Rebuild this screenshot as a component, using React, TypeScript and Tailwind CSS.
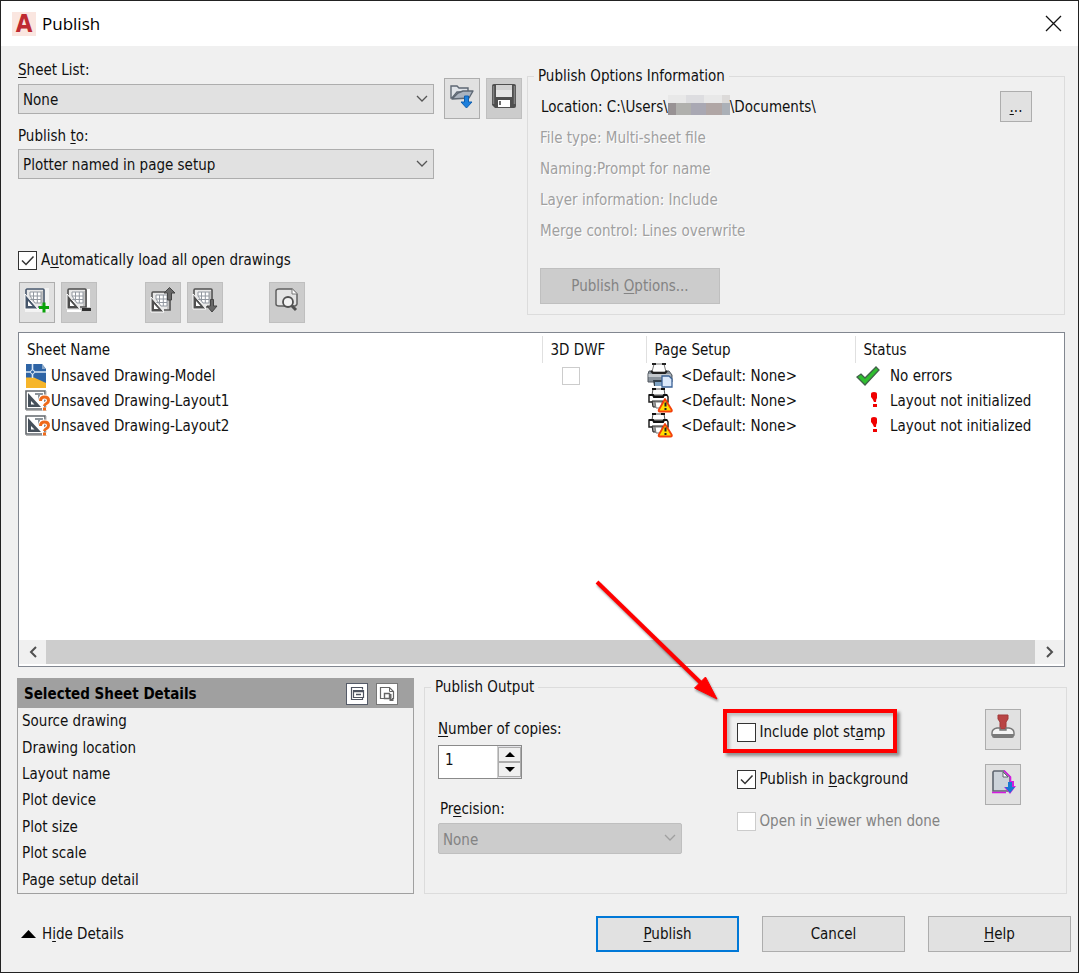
import React from "react";
import { clsx } from "clsx";

type Status = "ok" | "error";

type Sheet = {
  name: string;
  kind: "model" | "layout";
  pageSetup: string;
  status: Status;
  message: string;
};

const sheets: Sheet[] = [
  { name: "Unsaved Drawing-Model", kind: "model", pageSetup: "<Default: None>", status: "ok", message: "No errors" },
  { name: "Unsaved Drawing-Layout1", kind: "layout", pageSetup: "<Default: None>", status: "error", message: "Layout not initialized" },
  { name: "Unsaved Drawing-Layout2", kind: "layout", pageSetup: "<Default: None>", status: "error", message: "Layout not initialized" },
];

const details = [
  "Source drawing",
  "Drawing location",
  "Layout name",
  "Plot device",
  "Plot size",
  "Plot scale",
  "Page setup detail",
];

const options = [
  "File type: Multi-sheet file",
  "Naming:Prompt for name",
  "Layer information: Include",
  "Merge control: Lines overwrite",
];

// Underlined keyboard mnemonic
const Key = ({ children }: { children: React.ReactNode }) => (
  <span className="underline decoration-1 underline-offset-2">{children}</span>
);

/* ---------- icons ---------- */

const OpenListIcon = () => (
  <svg width="26" height="26" viewBox="0 0 26 26">
    <path d="M2 3h6l2 2h9v4H8L3 15H2z" fill="#dfe3e8" stroke="#5d6773" strokeWidth="1.4" />
    <path d="M3 16l6-6 5-2h10l-4 7z" fill="#aab3bf" stroke="#5d6773" strokeWidth="1.4" strokeLinejoin="round" />
    <path d="M15.500 13h4v6h3.500l-5.500 6-5.500-6h3.500z" fill="#1c7fdc" stroke="#0f5fb0" />
  </svg>
);

const SaveIcon = () => (
  <svg width="26" height="26" viewBox="0 0 26 26">
    <path d="M3 1h20q2 0 2 2v20q0 2-2 2H4l-3-3V3q0-2 2-2z" fill="#4f4f4f" />
    <path d="M2.500 3v18M23.500 3v18" stroke="#828282" strokeWidth="1.500" />
    <path d="M5 2h16v12H5z" fill="#e6e6e6" />
    <path d="M5 2h16v5H5z" fill="#d2d2d2" />
    <path d="M7 17h12v7H7z" fill="#fff" />
    <path d="M8 18h2v4H8z" fill="#6b6b6b" />
  </svg>
);

const GridSheet = ({ tone }: { tone: string }) => (
  <>
    <path d="M1 2h19v19H1z" fill="#e9e9e9" />
    <path d="M2 9V3q0-1 1-1h16q1 0 1 1v17H14" fill="none" stroke={tone} strokeWidth="1.600" />
    <path d="M18 4v15" stroke="#9a9a9a" />
    <path d="M6 5h11v11H11L6 9zM6 9h11M6 12.500h11M9.500 5v9M13.300 5v11" fill="#fff" stroke="#9298a0" />
    <path d="M1 7v15h13z" fill={tone} stroke="#fff" />
    <path d="M4 14v5h4.500z" fill="#fff" />
  </>
);

const AddSheetIcon = () => (
  <svg width="26" height="26" viewBox="0 0 26 26">
    <path d="M1 1h24v24H1z" fill="#f3f3f3" />
    <GridSheet tone="#46566b" />
    <path d="M15 20.500h10M20 15.500v10" stroke="#0aa20a" strokeWidth="3" />
  </svg>
);

const RemoveSheetIcon = () => (
  <svg width="26" height="26" viewBox="0 0 26 26">
    <path d="M21 2h3v18h-3z" fill="#fff" />
    <GridSheet tone="#4c4c4c" />
    <path d="M1 23h14v2H1z" fill="#fff" />
    <path d="M16 21h9v3h-9z" fill="#303030" />
  </svg>
);

const MoveUpIcon = () => (
  <svg width="26" height="26" viewBox="0 0 26 26">
    <g transform="translate(0 3)">
      <GridSheet tone="#505050" />
    </g>
    <path d="M14 0h12v13H17V4h-3z" fill="#cccccc" />
    <path d="M17.500 13V6H14l5.500-5.500L25 6h-3.500v7z" fill="#686868" stroke="#444" />
  </svg>
);

const MoveDownIcon = () => (
  <svg width="26" height="26" viewBox="0 0 26 26">
    <GridSheet tone="#505050" />
    <path d="M18.500 12.500h3V19H25l-5 6-5-6h3.500z" fill="#686868" stroke="#444" />
  </svg>
);

const PreviewIcon = () => (
  <svg width="26" height="26" viewBox="0 0 26 26">
    <path d="M5 2h13l5 5v10q0 1-2 2H5q-3 0-3-2V4q0-2 3-2z" fill="#e4e4e4" stroke="#606060" strokeWidth="1.500" />
    <path d="M18 2v5h5" fill="#fff" stroke="#777" />
    <circle cx="14" cy="15" r="5" fill="#f2f2f2" stroke="#505050" strokeWidth="1.800" />
    <path d="M18 19l4 4" stroke="#505050" strokeWidth="3" />
  </svg>
);

const ModelIcon = () => (
  <svg width="22" height="24" viewBox="0 0 22 24">
    <path d="M1 0h16l4 5v19H1z" fill="#2e64a5" />
    <path d="M1 13.500h8L21 19v5H1z" fill="#f6b52a" />
    <path d="M7.500 0v14M1 8h20" stroke="#dbe8f5" strokeWidth="1.600" />
    <circle cx="7.500" cy="8" r="2" fill="#2e64a5" stroke="#dbe8f5" />
    <path d="M17 0v5h4z" fill="#8aa8c8" />
  </svg>
);

const LayoutIcon = () => (
  <svg width="26" height="22" viewBox="0 0 26 22">
    <path d="M1 1h19v18H1z" fill="#fff" stroke="#63686d" strokeWidth="1.600" />
    <path d="M1 20.500h21M21 1v19" stroke="#b5b5b5" />
    <path d="M3 3v14h13z" fill="#46505a" />
    <path d="M6 11v3.500h3.500z" fill="#fff" />
    <path d="M10 4h8M14 4v6" stroke="#8d949a" strokeWidth="2" />
    <path d="M15.500 11q0-4 4-4t4 3.500q0 2-2 3t-2 2.500M19.500 17.500v3" fill="none" stroke="#fff" strokeWidth="5" />
    <path d="M15.500 11q0-4 4-4t4 3.500q0 2-2 3t-2 2.500M19.500 17.500v3" fill="none" stroke="#ee6a1a" strokeWidth="3" />
  </svg>
);

const PrinterIcon = ({ warning }: { warning: boolean }) => (
  <svg width="26" height="26" viewBox="0 1 26 26">
    {warning ? (
      <>
        <path d="M2 8h18l1 2v5H2z" fill="#fff" stroke="#222" strokeWidth="1.500" />
        <path d="M5 8l1-6h11l1 6z" fill="#fff" stroke="#555" />
        <path d="M5 2h4M14 2h4M2 8h4l1 2h9l1-2h3" fill="none" stroke="#111" strokeWidth="2" />
        <path d="M5 14h11v6H6z" fill="#999" stroke="#222" />
        <path d="M8 15h7v6H9z" fill="#fff" stroke="#777" />
        <path d="M18 12l6.500 10.500q1 2-1 2H13q-2 0-1-2z" fill="#ffdf00" stroke="#f3400c" strokeWidth="1.800" strokeLinejoin="round" />
        <path d="M18.500 15.500v4M18.500 21v2" stroke="#222" strokeWidth="2" />
      </>
    ) : (
      <>
        <path d="M2 9h20l3 4v7H1v-8z" fill="#89929b" stroke="#50575e" />
        <path d="M1.500 12h22v3h-22z" fill="#c3c8cd" />
        <path d="M5 10l2-8h10l2 8z" fill="#fff" stroke="#777" />
        <path d="M5 2h4M15 2h4M4 9l2 2h12l2-2" fill="none" stroke="#222" strokeWidth="2" />
        <path d="M6 18h12v6H7z" fill="#33404b" />
        <path d="M8 20h8v4H8z" fill="#7fa3c4" />
        <path d="M15 14h7l3 3v8H15z" fill="#dbe9fb" stroke="#3c6397" strokeWidth="1.300" />
      </>
    )}
  </svg>
);

const StatusIcon = ({ status }: { status: Status }) =>
  status === "ok" ? (
    <svg width="24" height="20" viewBox="0 0 24 20">
      <path d="M1 11l4-3 4 4L20 1l3 3L9 19z" fill="#2fbf2f" stroke="#41614a" strokeWidth="1.300" />
    </svg>
  ) : (
    <svg className="ml-3" width="12" height="18" viewBox="0 1 12 18">
      <path d="M3 3q0-2 3-2t3 2v4q-1 1-1 4H6Q5 8 3 6z" fill="#f00000" />
      <path d="M5 13h4v3H5z" fill="#f00000" />
    </svg>
  );

const StampIcon = () => (
  <svg width="26" height="26" viewBox="0 0 26 26">
    <path d="M8 1h10v4l-2 3v7h-6V8L8 5z" fill="#b94444" stroke="#a23838" />
    <path d="M7 14h3v2h6v-2h3q5 1 5 5v2H2v-2q0-4 5-5z" fill="#f4f4f4" stroke="#777" strokeWidth="1.400" />
    <path d="M2 20h22v2q0 2-2 2H4q-2 0-2-2z" fill="#7b7b7b" />
  </svg>
);

const PublishPageIcon = () => (
  <svg width="26" height="26" viewBox="0 0 26 26">
    <path d="M4 2h10l6 6v14H3V3z" fill="#ccd3da" stroke="#5e6670" strokeWidth="1.600" />
    <path d="M14 1.500l6.500 6.500v5M2 23.500h14" fill="none" stroke="#d41be0" strokeWidth="1.600" />
    <path d="M13 3v5h5z" fill="#fff" stroke="#5e6670" />
    <path d="M20 12h4v5h2l-6 8-6-7h4z" fill="#d41be0" />
    <path d="M18 13h4v5h3l-5 6-5-6h3z" fill="#1878d2" />
  </svg>
);

const DetailListIcon = () => (
  <svg width="18" height="18" viewBox="0 0 18 18" fill="none" stroke="#4d5360">
    <path d="M14.500 4.500v-2h-11v12h11v-2" strokeWidth="1.200" />
    <path d="M5.500 5.500h10v7h-10z" fill="#fff" strokeWidth="1.200" />
    <path d="M5 6.500h11M8 9.500h5" strokeWidth="1.500" />
  </svg>
);

const DetailPreviewIcon = () => (
  <svg width="18" height="18" viewBox="0 0 18 18" fill="none" stroke="#666">
    <path d="M6 13.500H2.500v-11h9l4 4v7H14" strokeWidth="1.200" />
    <path d="M11.500 2.500v4h4" />
    <path d="M6.500 8.500h5v5h-5z" fill="#fff" strokeWidth="1.400" />
    <path d="M12.500 9v6h3" strokeWidth="2" />
  </svg>
);

/* ---------- controls ---------- */

const IconButton = ({ label, disabled, children }: { label: string; disabled?: boolean; children: React.ReactNode }) => (
  <button
    type="button"
    aria-label={label}
    disabled={disabled}
    className={clsx(
      "flex h-[41px] w-9 shrink-0 items-start justify-center border pt-1",
      disabled ? "border-[#bfbfbf] bg-[#cccccc]" : "border-[#adadad] bg-[#e1e1e1]"
    )}
  >
    {children}
  </button>
);

const Select = ({ id, value, disabled }: { id: string; value: string; disabled?: boolean }) => (
  <div className="relative">
    <select
      id={id}
      disabled={disabled}
      defaultValue={value}
      className={clsx(
        "block w-full appearance-none border pl-1 pt-0.5 opacity-100",
        disabled ? "h-[31px] rounded-xs border-[#bfbfbf] bg-[#cccccc] text-[#838383]" : "h-[30px] border-[#adadad] bg-[#e1e1e1] text-[#111111]"
      )}
    >
      <option>{value}</option>
    </select>
    <svg
      className={clsx("pointer-events-none absolute right-1.5 top-2.5", disabled ? "text-[#a0a0a0]" : "text-[#555555]")}
      width="12"
      height="10"
      viewBox="0 0 12 10"
    >
      <path d="M1 2l5 5 5-5" fill="none" stroke="currentColor" strokeWidth="1.300" />
    </svg>
  </div>
);

const CheckBox = ({ checked, disabled, children }: { checked?: boolean; disabled?: boolean; children: React.ReactNode }) => (
  <label className={clsx("flex items-center gap-1", disabled && "text-[#838383]")}>
    <span className="relative flex">
      <input
        type="checkbox"
        defaultChecked={checked}
        disabled={disabled}
        className={clsx("peer size-[19px] appearance-none border bg-white", disabled ? "border-[#cccccc]" : "border-[#333333]")}
      />
      <svg className="pointer-events-none absolute inset-0 hidden peer-checked:block" width="19" height="19" viewBox="0 0 19 19">
        <path d="M4 9.500l4 4 7.500-8" fill="none" stroke="#333" strokeWidth="1.500" />
      </svg>
    </span>
    <span>{children}</span>
  </label>
);

const FooterButton = ({ primary, children }: { primary?: boolean; children: React.ReactNode }) => (
  <button
    type="button"
    className={clsx("h-9 w-[143px] bg-[#e1e1e1]", primary ? "border-2 border-[#0078d7]" : "border border-[#adadad]")}
  >
    {children}
  </button>
);

const Location = () => (
  <div className="flex items-center pl-px">
    <span>Location: C:\Users\</span>
    {/* hidden user name */}
    <span className="mb-1 flex h-5 w-[62px] flex-col">
      <span className="flex h-2">
        <span className="flex-1 bg-[#e8e8e8]" />
        <span className="flex-1 bg-[#dddde0]" />
        <span className="flex-1 bg-[#e8e8e8]" />
        <span className="w-2 bg-[#dcdad9]" />
      </span>
      <span className="flex h-3">
        <span className="w-2 bg-[#989294]" />
        <span className="flex-1 bg-[#b0b0ad]" />
        <span className="flex-1 bg-[#a9a8b3]" />
        <span className="flex-1 bg-[#b0a6a5]" />
        <span className="w-2 bg-[#abb0b7]" />
      </span>
    </span>
    <span>\Documents\</span>
  </div>
);

const SheetTable = () => (
  <div className="mt-[9px] flex h-[335px] flex-col border border-[#828790] bg-white">
    <div className="flex-1 pt-[3px]">
      <table className="w-full table-fixed border-collapse text-left">
        <colgroup>
          <col />
          <col className="w-[104px]" />
          <col className="w-[209px]" />
          <col className="w-[209px]" />
        </colgroup>
        <thead>
          <tr className="h-[27px]">
            <th className="p-0 pl-2 font-normal">Sheet Name</th>
            <th className="border-l border-[#e0e0e0] p-0 pl-2 font-normal">3D DWF</th>
            <th className="border-l border-[#e0e0e0] p-0 pl-2 font-normal">Page Setup</th>
            <th className="border-l border-[#e0e0e0] p-0 pl-2 font-normal">Status</th>
          </tr>
        </thead>
        <tbody>
          {sheets.map((sheet) => (
            <tr key={sheet.name} className="h-[25px]">
              <td className="p-0 pl-1.5">
                <div className="flex h-[25px] items-center">
                  <span className="flex w-[26px]">{sheet.kind === "model" ? <ModelIcon /> : <LayoutIcon />}</span>
                  {sheet.name}
                </div>
              </td>
              <td className="p-0 pl-5">
                {sheet.kind === "model" && (
                  <input type="checkbox" aria-label="3D DWF" className="block size-[18px] appearance-none border border-[#cccccc] bg-white" />
                )}
              </td>
              <td className="p-0 pl-px">
                <div className="flex h-[25px] items-center gap-2">
                  <PrinterIcon warning={sheet.kind === "layout"} />
                  {sheet.pageSetup}
                </div>
              </td>
              <td className="p-0 pl-px">
                <div className="flex h-[25px] items-center">
                  <span className="flex w-[34px]">
                    <StatusIcon status={sheet.status} />
                  </span>
                  {sheet.message}
                </div>
              </td>
            </tr>
          ))}
        </tbody>
      </table>
    </div>
    <div className="mb-0.5 flex h-6 bg-[#f0f0f0]">
      <button type="button" aria-label="Scroll left" className="flex w-[27px] items-center justify-center">
        <svg width="10" height="12" viewBox="0 0 10 12">
          <path d="M8 1L3 6l5 5" fill="none" stroke="#505050" strokeWidth="2" />
        </svg>
      </button>
      <div className="flex-1 bg-[#cdcdcd]" />
      <button type="button" aria-label="Scroll right" className="flex w-[29px] items-center justify-center">
        <svg width="10" height="12" viewBox="0 0 10 12">
          <path d="M2 1l5 5-5 5" fill="none" stroke="#505050" strokeWidth="2" />
        </svg>
      </button>
    </div>
  </div>
);

const SheetDetails = () => (
  <section className="flex flex-1 flex-col border border-[#a0a0a0]">
    <header className="flex h-[29px] items-center gap-2 bg-[#a0a0a0] pl-1.5 pr-[15px]">
      <h2 className="flex-1 font-bold text-black">Selected Sheet Details</h2>
      <button type="button" aria-label="Show details" className="flex size-[22px] items-center justify-center border border-[#555b68] bg-white">
        <DetailListIcon />
      </button>
      <button type="button" aria-label="Show preview" className="flex size-[22px] items-center justify-center border border-[#777777] bg-white">
        <DetailPreviewIcon />
      </button>
    </header>
    <ul className="flex flex-1 flex-col">
      {details.map((item) => (
        <li key={item} className="flex flex-1 items-center pl-1">
          {item}
        </li>
      ))}
    </ul>
  </section>
);

const PublishOutput = () => (
  <fieldset className="min-w-0 border border-[#dcdcdc] pb-[39px] pl-[13px] pr-[45px]">
    <legend className="-ml-[7px] px-1 leading-5">Publish Output</legend>
    <div className="flex justify-between">
      <div className="w-[244px] pt-5">
        <label htmlFor="copies" className="block leading-6">
          <Key>N</Key>umber of copies:
        </label>
        <div className="mt-1 flex h-[34px] w-[84px] border border-[#8a8a8a] bg-white">
          <input id="copies" type="text" defaultValue="1" className="w-0 flex-1 bg-white pb-1 pl-1.5" />
          <div className="flex w-6 flex-col border-l border-[#cccccc] bg-[#e4e4e8] py-px">
            <button type="button" aria-label="More copies" className="flex flex-1 items-center justify-center border border-[#acacac] bg-[#f0f0f0]">
              <svg width="10" height="5" viewBox="0 0 10 5">
                <path d="M0 5l5-5 5 5z" fill="#000" />
              </svg>
            </button>
            <button type="button" aria-label="Fewer copies" className="flex flex-1 items-center justify-center border border-[#acacac] bg-[#f0f0f0]">
              <svg width="10" height="5" viewBox="0 0 10 5">
                <path d="M0 0l5 5 5-5z" fill="#000" />
              </svg>
            </button>
          </div>
        </div>
        <label htmlFor="precision" className="mt-[18px] block pl-0.5 leading-6">
          Pr<Key>e</Key>cision:
        </label>
        <div className="mt-0.5">
          <Select id="precision" value="None" disabled />
        </div>
      </div>

      <div className="w-[222px] pt-3">
        {/* highlighted option with the arrow that points at it */}
        <div className="relative flex h-11 w-[174px] items-center border-4 border-[#ff0000] pl-2.5 pt-0.5 shadow-[3px_3px_3px_#00000066,inset_3px_3px_3px_#00000033]">
          <CheckBox>
            Include plot st<Key>a</Key>mp
          </CheckBox>
          <svg className="pointer-events-none absolute -left-[136px] -top-[136px] drop-shadow-[1px_2px_1px_#00000066]" width="136" height="130" viewBox="0 0 136 130">
            <path d="M6 5l106 103" stroke="#ff0000" strokeWidth="4" />
            <path d="M126 122l-22.500-11 11-11z" fill="#ff0000" stroke="#ff0000" strokeWidth="1" />
          </svg>
        </div>
        <div className="mt-4 pl-3.5">
          <CheckBox checked>
            Publish in <Key>b</Key>ackground
          </CheckBox>
        </div>
        <div className="mt-[22px] pl-3.5">
          <CheckBox disabled>
            Open in <Key>v</Key>iewer when done
          </CheckBox>
        </div>
      </div>

      <div className="flex flex-col gap-3.5 pt-3">
        <IconButton label="Plot stamp settings">
          <StampIcon />
        </IconButton>
        <IconButton label="Publish in background settings">
          <PublishPageIcon />
        </IconButton>
      </div>
    </div>
  </fieldset>
);

export default function App() {
  return (
    <div className="min-h-screen border border-[#222222] bg-[#f0f0f0] font-['DejaVu_Sans_Condensed','Noto_Sans',sans-serif] text-[15px] leading-5 text-[#111111]">
      <header className="flex h-[45px] items-center gap-1.5 bg-white pl-[11px] pr-4">
        <span aria-hidden="true" className="flex size-6 items-center justify-center bg-[#fae6e0] text-[24px] font-black leading-6 text-[#bf2a31]">
          A
        </span>
        <h1 className="flex-1 font-['Open_Sans','Noto_Sans',sans-serif] text-[17px] leading-6 text-black">Publish</h1>
        <button type="button" aria-label="Close">
          <svg width="17" height="17" viewBox="0 0 17 17">
            <path d="M1 1l15 15M16 1L1 16" stroke="#111" strokeWidth="1.300" />
          </svg>
        </button>
      </header>

      <main className="px-4 pb-4 pr-[13px]">
        <div className="flex gap-[5px] pl-px">
          <div className="shrink-0">
            <div className="flex gap-1.5 pt-3">
              <div className="mr-1 w-[416px]">
                <label htmlFor="sheet-list" className="block leading-6">
                  <Key>S</Key>heet List:
                </label>
                <div className="mt-0.5">
                  <Select id="sheet-list" value="None" />
                </div>
                <label htmlFor="publish-to" className="mt-2.5 block leading-6">
                  Publish <Key>t</Key>o:
                </label>
                <div className="mt-px">
                  <Select id="publish-to" value="Plotter named in page setup" />
                </div>
              </div>
              <div className="flex gap-1.5 pt-5">
                <IconButton label="Load sheet list">
                  <OpenListIcon />
                </IconButton>
                <IconButton label="Save sheet list" disabled>
                  <SaveIcon />
                </IconButton>
              </div>
            </div>

            <div className="mt-[71px]">
              <CheckBox checked>
                A<Key>u</Key>tomatically load all open drawings
              </CheckBox>
            </div>

            <div className="mt-3 flex gap-1.5 pl-px">
              <IconButton label="Add sheets">
                <AddSheetIcon />
              </IconButton>
              <IconButton label="Remove sheets" disabled>
                <RemoveSheetIcon />
              </IconButton>
              <div className="ml-[42px] flex gap-1.5">
                <IconButton label="Move sheet up" disabled>
                  <MoveUpIcon />
                </IconButton>
                <IconButton label="Move sheet down" disabled>
                  <MoveDownIcon />
                </IconButton>
              </div>
              <div className="ml-10">
                <IconButton label="Preview" disabled>
                  <PreviewIcon />
                </IconButton>
              </div>
            </div>
          </div>

          <fieldset className="mb-2 mt-5 min-w-0 flex-1 border border-[#dcdcdc] px-3">
            <legend className="-ml-1.5 px-1 leading-5">Publish Options Information</legend>
            <div className="flex items-center justify-between pr-5 pt-[5px]">
              <Location />
              <button type="button" aria-label="Browse location" className="h-[31px] w-8 border border-[#adadad] bg-[#e1e1e1]">
                <Key>.</Key>..
              </button>
            </div>
            <ul className="text-[#a0a0a0] [text-shadow:1px_1px_0_#ffffff]">
              {options.map((option) => (
                <li key={option} className="flex h-[31px] items-center">
                  {option}
                </li>
              ))}
            </ul>
            <button type="button" disabled className="mt-[22px] h-9 w-[180px] border border-[#bfbfbf] bg-[#cccccc] text-[#838383]">
              Publish <Key>O</Key>ptions...
            </button>
          </fieldset>
        </div>

        <div className="pl-px">
          <SheetTable />
        </div>

        <div className="-mr-0.5 mt-2.5 grid grid-cols-[397fr_643fr] gap-2.5">
          <div className="flex pt-px">
            <SheetDetails />
          </div>
          <PublishOutput />
        </div>

        <footer className="mt-[22px] flex items-center justify-between">
          <button type="button" className="flex items-center gap-1.5 pl-1">
            <svg width="15" height="8" viewBox="0 0 15 8">
              <path d="M0 8l7.500-8L15 8z" fill="#000" />
            </svg>
            <span>
              H<Key>i</Key>de Details
            </span>
          </button>
          <div className="-mr-1.5 flex gap-[23px]">
            <FooterButton primary>
              <Key>P</Key>ublish
            </FooterButton>
            <FooterButton>Cancel</FooterButton>
            <FooterButton>
              <Key>H</Key>elp
            </FooterButton>
          </div>
        </footer>
      </main>
    </div>
  );
}
